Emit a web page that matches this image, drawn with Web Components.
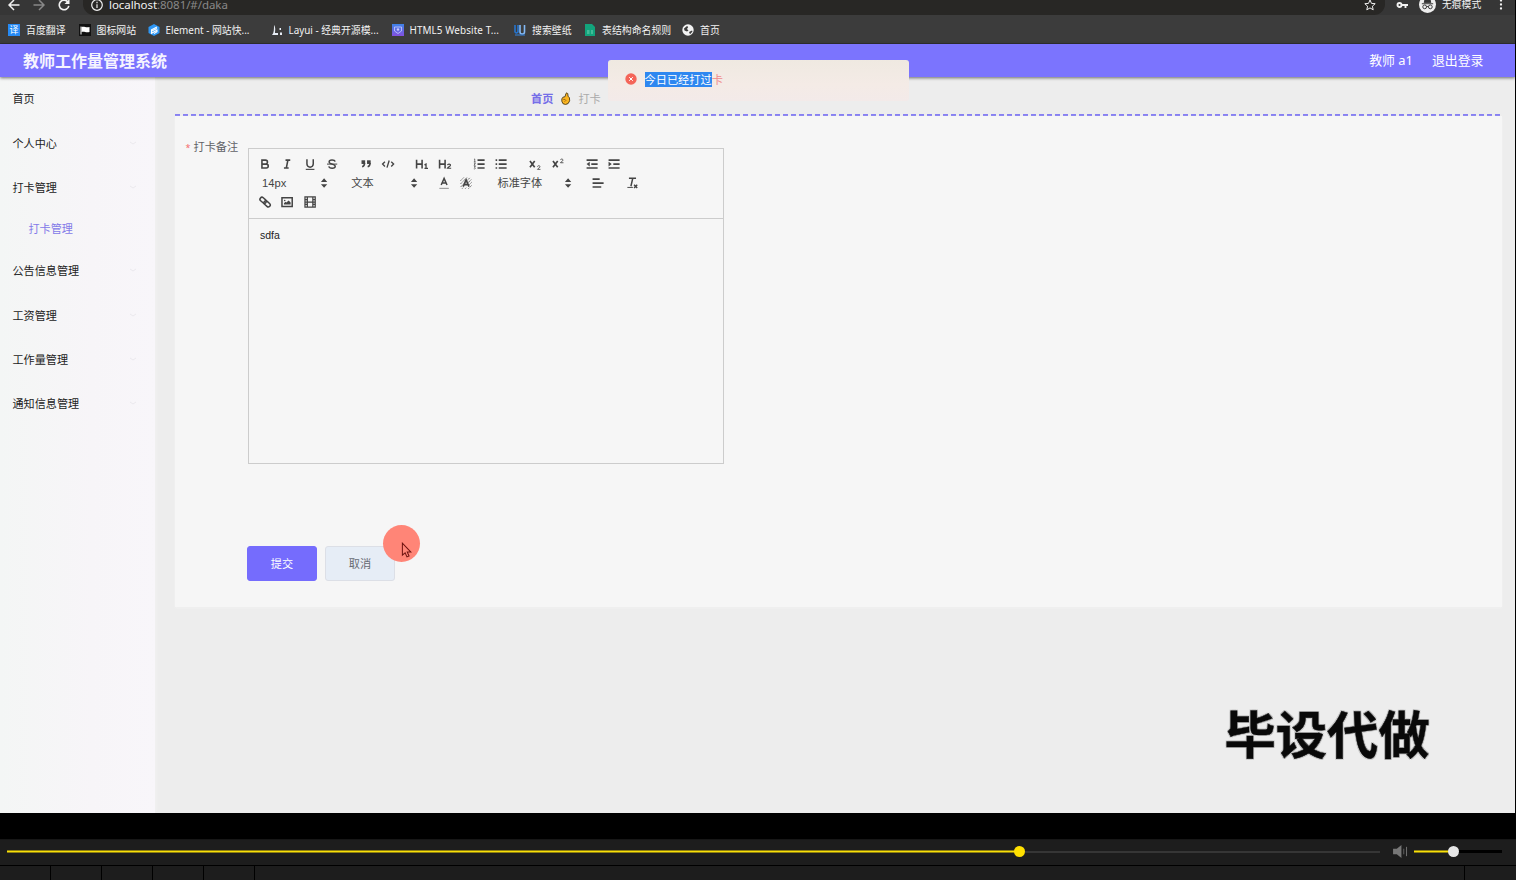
<!DOCTYPE html>
<html lang="zh-CN">
<head>
<meta charset="utf-8">
<title>教师工作量管理系统</title>
<style>
	html, body {
		margin: 0;
		width: 1516px;
		height: 880px;
		overflow: hidden;
		background: #000;
		font-family: "Noto Sans", "Noto Sans CJK SC", sans-serif;
	}
</style>
</head>
<body>
<video-page></video-page>
<script>
const line = (d, extra = '') => `<path d="${d}" fill="none" stroke="currentColor" ${extra}/>`;

// name: [viewBox, markup]
const ICONS = {
	bold: ['0 0 18 18', line('M5 4h4.5a2.5 2.5 0 0 1 0 5H5zM5 9h5.5a2.5 2.5 0 0 1 0 5H5z', 'stroke-width="2"')],
	italic: ['0 0 18 18', line('M7 4h6M5 14h6M8 14l2-10', 'stroke-width="2"')],
	underline: ['0 0 18 18', line('M5 3v6a4 4 0 0 0 8 0V3', 'stroke-width="1.9"') + line('M3.5 15.7h11', 'stroke-width="1.4"')],
	strike: ['0 0 18 18', line('M2.5 9h13', 'stroke-width="1.3"') + line('M12.8 6C12.2 3 5.2 3 5.2 6.2c0 3 7.8 2.5 7.8 5.6 0 3.4-7.5 3.3-8.2.2', 'stroke-width="1.8"')],
	quote: ['0 0 18 18', '<g fill="currentColor" stroke="currentColor" stroke-width="1.6"><rect x="4" y="5" width="3" height="3"/><rect x="11" y="5" width="3" height="3"/></g>' + line('M7 7.5c0 3-.6 4.3-3 5M14 7.5c0 3-.6 4.3-3 5', 'stroke-width="2"')],
	code: ['0 0 18 18', line('M5 6L2 9l3 3M13 6l3 3-3 3M10.4 4.5l-2.8 9', 'stroke-width="1.7"')],
	h1: ['0 0 18 18', line('M2 3.5v11M9 3.5v11M2 9h7', 'stroke-width="2"') + line('M12 10l2-1v5.5M12 14.3h4.5', 'stroke-width="1.6"')],
	h2: ['0 0 18 18', line('M2 3.5v11M9 3.5v11M2 9h7', 'stroke-width="2"') + line('M12 10.3c.5-2 4-1.6 3.8.2-.1 1.4-2.8 2.2-3.8 3.8h4.7', 'stroke-width="1.5"')],
	ordered: ['0 0 18 18', line('M7 4h9M7 9h9M7 14h9', 'stroke-width="2"') + line('M2.5 3l1-.5v4M2.3 6.3h2.4M2.5 8h1.8l-1.8 2.5h2M2.5 12h1.8l-1 1.5c2 .5.5 2-1 1.5', 'stroke-width=".9"')],
	bullet: ['0 0 18 18', line('M6 4h10M6 9h10M6 14h10M2 4h2M2 9h2M2 14h2', 'stroke-width="2"')],
	sub: ['0 0 18 18', line('M2.5 5l6 8M8.5 5l-6 8', 'stroke-width="2.1"') + line('M12 12.2c.5-1.8 3.4-1.4 3.2.2-.1 1.3-2.4 1.8-3.2 3.3h3.8', 'stroke-width="1.1"')],
	sup: ['0 0 18 18', line('M2.5 5l6 8M8.5 5l-6 8', 'stroke-width="2.1"') + line('M12 3.8c.5-1.8 3.4-1.4 3.2.2-.1 1.3-2.4 1.8-3.2 3.3h3.8', 'stroke-width="1.1"')],
	outdent: ['0 0 18 18', line('M2 4h14M8 9h8M2 14h14', 'stroke-width="2"') + '<path d="M6 6v6L2 9z" fill="currentColor"/>'],
	indent: ['0 0 18 18', line('M2 4h14M8 9h8M2 14h14', 'stroke-width="2"') + '<path d="M2 6v6l4-3z" fill="currentColor"/>'],
	color: ['0 0 18 18', '<path d="M3 15h12v1.4H3z" fill="#999"/>' + line('M5.3 11.5L9 3l3.7 8.5M6.5 9h5', 'stroke-width="1.9"')],
	background: ['0 0 18 18', '<path d="M2 6l4-4M2 10l8-8M2 14l12-12M4 16L16 4M8 16l8-8M12 16l4-4" stroke="#555" stroke-width="1.2" stroke-dasharray="1.6 .8"/><path d="M9 3l5 11.500H4z" fill="#f6f6f6"/>' + line('M5.3 13.5L9 5l3.7 8.5M6.5 11h5', 'stroke-width="2.1"')],
	align: ['0 0 18 18', line('M2 4h9M2 9h14M2 14h11', 'stroke-width="2"')],
	clean: ['0 0 18 18', line('M5 3h9M9.8 3L7.5 13', 'stroke-width="1.9"') + line('M3 14.5h7', 'stroke-width="1.2"') + line('M11.5 11l4 4.2M15.5 11l-4 4.2', 'stroke-width="1.8"')],
	link: ['0 0 18 18', '<g fill="none" stroke="currentColor" stroke-width="1.9"><rect x="2" y="4.2" width="9" height="5" rx="2.5" transform="rotate(42 6.5 6.7)"/><rect x="7" y="8.8" width="9" height="5" rx="2.5" transform="rotate(42 11.5 11.3)"/></g>'],
	image: ['0 0 18 18', line('M2.5 3.5h13v11h-13z', 'stroke-width="1.9"') + '<circle cx="6" cy="7" r="1" fill="currentColor"/><path d="M5 12v-1.5l2-2 1 1L11 7l2.5 2.5V12z" fill="currentColor"/>'],
	video: ['0 0 18 18', line('M2.5 2.5h13v13h-13zM5.5 3v12M12.5 3v12M5.5 9h7M3 6h2M3 9h2M3 12h2M13 6h2M13 9h2M13 12h2', 'stroke-width="1.6"')],
	picker: ['0 0 18 18', '<path d="M5 7.5h8L9 3zM5 10.5h8L9 15z" fill="currentColor"/>'],
	back: ['0 0 12 12', line('M6 1L1 6l5 5M1 6h10.5', 'stroke-width="1.5"')],
	forward: ['0 0 12 12', line('M6 1l5 5-5 5M11 6H.5', 'stroke-width="1.5"')],
	reload: ['0 0 12 12', line('M10 3.2A4.8 4.8 0 1 0 10.8 6.8', 'stroke-width="1.6"') + '<path d="M11.5 0v5h-5z" fill="currentColor"/>'],
	info: ['0 0 12 12', line('M11.3 6A5.3 5.3 0 1 1 .7 6a5.3 5.3 0 0 1 10.6 0zM6 5.2V9M6 2.8v1.4', 'stroke-width="1.2"')],
	star: ['0 0 12 12', line('M6 1l1.5 3.4 3.7.3-2.8 2.5.8 3.6L6 8.9l-3.2 1.9.8-3.6L.8 4.7l3.7-.3z')],
	key: ['0 0 12 12', line('M5.5 6a2 2 0 1 1-4 0 2 2 0 0 1 4 0zM5.5 6H12M9.5 6v3', 'stroke-width="1.9"')],
	incognito: ['0 0 18 18', '<circle cx="9" cy="9" r="9" fill="#eee"/><path d="M3 8.2h12M5.5 7l1-4h5l1 4z" fill="#333" stroke="#333"/><path d="M8 11.5a2 2 0 1 1-4 0 2 2 0 0 1 4 0zM14 11.5a2 2 0 1 1-4 0 2 2 0 0 1 4 0zM8 11.2h2" fill="none" stroke="#333"/>'],
	more: ['0 0 12 12', '<g fill="currentColor"><circle cx="6" cy="1.5" r="1.15"/><circle cx="6" cy="5.5" r="1.15"/><circle cx="6" cy="9.5" r="1.15"/></g>'],
	flag: ['0 0 12 12', '<rect width="12" height="12" fill="#111"/><path d="M2 2.5v8" stroke="#fff"/><path d="M2.5 3c3-1 4 1 8 0v5c-4 1-5-1-8 0z" fill="#fff"/>'],
	element: ['0 0 12 12', '<path d="M6 0l5.5 3v6L6 12 .5 9V3z" fill="#2e97f5"/><path d="M9 3L3.5 5.8v1.4L9 4.5M3.5 7.2v2l5.5-3v1.6L6 9.6" fill="none" stroke="#fff" stroke-width="1.1"/>'],
	layui: ['0 0 12 12', '<path d="M3 1c2 3 1 6 1 8h3v2H1c2-2 2-6 2-10zM8.5 4H10v2H8.500zM9 8.500h2V11H9z" fill="#e8edf5"/>'],
	html5: ['0 0 12 12', '<defs><linearGradient id="a" x2="0" y2="1"><stop stop-color="#3e83e8"/><stop offset="1" stop-color="#8350e0"/></linearGradient></defs><rect width="12" height="12" fill="url(#a)"/><path d="M2.5 3h7v4L6 9.5 2.5 7z" fill="none" stroke="#c9cdfc" stroke-width=".8"/><circle cx="6" cy="5.5" r="1.2" fill="#c9cdfc"/>'],
	wallpaper: ['0 0 12 12', '<path d="M1 1v7q1 2 3 0V1" fill="none" stroke="#2577d5" stroke-width="1.5"/><path d="M6 1v7q0 2 2.2 2 2.3 0 2.3-2V1" fill="none" stroke="#83b9f4" stroke-width="1.6"/><path d="M1 11h10" stroke="#3283df"/>'],
	sheet: ['0 0 12 12', '<path d="M1 0h7l3 3v9H1z" fill="#12a47c"/><path d="M3 7h2.500M7 7h2M3 9h2.500M7 9h2" stroke="#8fdcc4" stroke-width=".8"/>'],
	globe: ['0 0 12 12', '<circle cx="6" cy="6" r="5.7" fill="#f3f3f3"/><path d="M2 4.5l3-2.5 1.2 1-1.2 2 1.5 1.5-1.5 1-2.5-1zM7 8l3-1.5.5 1-2.5 2.7z" fill="#3c3c3c"/>'],
	hand: ['0 0 12 14', '<path d="M2 7.500Q2.500 5 5.500 5L6.500 1.500Q7.800 0 8.500 1.800L8.800 4.500Q11 5.500 10.500 9.500 9.500 13.500 6 13.500T2 10z" fill="#fbb51f" stroke="#4b3d1d"/><path d="M3.500 8q2.500-.5 3 1L5 10.500" fill="none" stroke="#8b5b14" stroke-width=".9"/>'],
	error: ['0 0 12 12', '<circle cx="6" cy="6" r="5.7" fill="#f46559"/><path d="M4.2 4.2l3.6 3.6M7.8 4.2L4.2 7.8" stroke="#fff"/>'],
	pointer: ['0 0 12 18', '<path d="M1.5 1v13l3-2.5 2 4.5 2.3-1-2-4.3h4z" fill="#ff8577" stroke="#6e1411" stroke-width="1.1"/>'],
	volume: ['0 0 16 14', '<path d="M0 4h4l5-4v14L4 10H0z" fill="#777"/><path d="M11.5 4v6" stroke="#666"/><path d="M14.5 2v10" stroke="#777"/>'],
	chevron: ['0 0 12 12', line('M3 5l3 2 3-2')],
};

class UiIcon extends HTMLElement {
	constructor() {
		super();
		this.attachShadow({ mode: 'open' });
	}

	connectedCallback() {
		const [box, markup] = ICONS[this.getAttribute('name')];
		this.shadowRoot.innerHTML = `
			<style>
				:host { display: block; flex: none; width: var(--icon-w, 12px); height: var(--icon-h, var(--icon-w, 12px)); }
				svg { display: block; width: 100%; height: 100%; }
			</style>
			<svg viewBox="${box}">${markup}</svg>`;
	}
}
customElements.define('ui-icon', UiIcon);

class BookmarkLink extends HTMLElement {
	constructor() {
		super();
		this.attachShadow({ mode: 'open' });
		this.shadowRoot.innerHTML = `
			<style>
				:host { display: flex; align-items: center; gap: 6px; min-width: 0; white-space: nowrap; }
				.icon { width: 12px; height: 12px; flex: none; }
			</style>
			<span class="icon"><slot name="icon"></slot></span><slot></slot>`;
	}
}
customElements.define('bookmark-link', BookmarkLink);

class BrowserBar extends HTMLElement {
	constructor() {
		super();
		this.attachShadow({ mode: 'open' });
		this.shadowRoot.innerHTML = `
			<style>
				:host { display: block; background: #3c3c3c; color: #f2f2f2; height: 44px; }
				/* the bar is scrolled half out of the frame, so its items sit on the top edge */
				.address { display: flex; align-items: center; height: 15px; box-sizing: border-box; padding: 0 0 6px 8px; background: #363636; }
				.address > ui-icon { margin-right: 13px; }
				.dim { color: #888; }
				.pill { display: flex; align-items: center; height: 15px; width: 1302px; flex: none; box-sizing: border-box; padding: 0 9px 6px 8px; margin-bottom: -6px; border-radius: 0 0 11px 11px; background: #282725; font-size: 11.5px; line-height: 9px; }
				.url { flex: 1; margin-left: 6px; letter-spacing: -.06px; }
				.key { margin-left: 11px; }
				.address > .key { margin-right: 11px; }
				.mode { display: flex; align-items: center; width: 68px; gap: 6px; font-size: 9.8px; line-height: 9px; white-space: nowrap; }
				.mode ui-icon { --icon-w: 17px; }
				.bookmarks { display: grid; grid-template-columns: 70.5px 69px 123px 121px 122.5px 70px 98px 50px; align-items: center; height: 29px; padding: 1px 0 0 8px; font-size: 9.9px; line-height: 16px; border-bottom: 1px solid #303033; box-sizing: border-box; }
				.yi { display: block; width: 12px; height: 12px; background: #268af4; color: #fff; font-size: 9px; line-height: 12px; text-align: center; }
				.html5 { letter-spacing: .1px; }
			</style>
			<div class="address">
				<ui-icon name="back"></ui-icon>
				<ui-icon name="forward" class="dim"></ui-icon>
				<ui-icon name="reload"></ui-icon>
				<div class="pill">
					<ui-icon name="info"></ui-icon>
					<span class="url">localhost<span class="dim">:8081/#/daka</span></span>
					<ui-icon name="star"></ui-icon>
				</div>
				<ui-icon name="key" class="key"></ui-icon>
				<span class="mode"><ui-icon name="incognito"></ui-icon>无痕模式</span>
				<ui-icon name="more" style="margin-left:14px"></ui-icon>
			</div>
			<div class="bookmarks">
				<bookmark-link><span slot="icon" class="yi">译</span>百度翻译</bookmark-link>
				<bookmark-link><ui-icon slot="icon" name="flag"></ui-icon>图标网站</bookmark-link>
				<bookmark-link><ui-icon slot="icon" name="element"></ui-icon>Element - 网站快...</bookmark-link>
				<bookmark-link><ui-icon slot="icon" name="layui"></ui-icon>Layui - 经典开源模...</bookmark-link>
				<bookmark-link class="html5"><ui-icon slot="icon" name="html5"></ui-icon>HTML5 Website T...</bookmark-link>
				<bookmark-link><ui-icon slot="icon" name="wallpaper"></ui-icon>搜索壁纸</bookmark-link>
				<bookmark-link><ui-icon slot="icon" name="sheet"></ui-icon>表结构命名规则</bookmark-link>
				<bookmark-link><ui-icon slot="icon" name="globe"></ui-icon>首页</bookmark-link>
			</div>`;
	}
}
customElements.define('browser-bar', BrowserBar);

class AppHeader extends HTMLElement {
	constructor() {
		super();
		this.attachShadow({ mode: 'open' });
		this.shadowRoot.innerHTML = `
			<style>
				:host { display: flex; align-items: center; height: 33px; box-sizing: border-box; padding: 0 31.5px 0 23px; background: #7b74fe; color: #fff; position: relative; z-index: 1; box-shadow: 0 1px 3px rgba(0, 0, 0, .55); font-size: 12.9px; line-height: 32px; white-space: nowrap; }
				h1 { flex: 1; margin: 0; font-size: 16px; font-weight: 700; color: #f6f4ff; }
				.user { margin-right: 19px; }
				span { margin-top: -1px; }
			</style>
			<h1>教师工作量管理系统</h1>
			<span class="user">教师 a1</span>
			<span>退出登录</span>`;
	}
}
customElements.define('app-header', AppHeader);

class SideMenu extends HTMLElement {
	constructor() {
		super();
		this.attachShadow({ mode: 'open' });
		this.shadowRoot.innerHTML = `
			<style>
				:host { display: block; width: 155px; flex: none; background: linear-gradient(90deg, #f4f6f5, #f7f5f8 60%, #f8f6fa); box-shadow: 0 0 4px #f4f4f4; z-index: 0; position: relative; font-size: 11.1px; color: #222; }
				.item { display: flex; align-items: center; justify-content: space-between; height: 44.2px; box-sizing: border-box; padding: 1px 16px 0 12.5px; }
				.home { height: 43px; padding: 0 16px 2px 12.5px; }
				.child { height: 39.5px; padding: 0 0 0 28.5px; color: #837ae8; }
				ui-icon { color: #ebe9ee; }
			</style>
			<div class="item home">首页</div>
			<div class="item">个人中心<ui-icon name="chevron"></ui-icon></div>
			<div class="item">打卡管理<ui-icon name="chevron"></ui-icon></div>
			<div class="item child">打卡管理</div>
			<div class="item">公告信息管理<ui-icon name="chevron"></ui-icon></div>
			<div class="item">工资管理<ui-icon name="chevron"></ui-icon></div>
			<div class="item">工作量管理<ui-icon name="chevron"></ui-icon></div>
			<div class="item">通知信息管理<ui-icon name="chevron"></ui-icon></div>`;
	}
}
customElements.define('side-menu', SideMenu);

class RichEditor extends HTMLElement {
	constructor() {
		super();
		this.attachShadow({ mode: 'open' });
		const group = (...names) => `<span class="group">${names.map(n => `<span class="btn"><ui-icon name="${n}"></ui-icon></span>`).join('')}</span>`;
		const picker = (text, width) => `<span class="group picker" style="width:${width}px">${text}<ui-icon name="picker"></ui-icon></span>`;
		this.shadowRoot.innerHTML = `
			<style>
				:host { display: flex; flex-direction: column; width: 476px; height: 316px; box-sizing: border-box; border: 1px solid #ccc; color: #444; }
				.toolbar { padding: 6px 5.5px; height: 70px; box-sizing: border-box; border-bottom: 1px solid #ccc; --icon-w: 14.2px; }
				.row { display: flex; height: 19px; }
				.group { display: flex; flex: none; margin-right: 11.8px; }
				.btn { display: flex; align-items: center; justify-content: center; width: 22.3px; }
				.picker { align-items: center; justify-content: space-between; box-sizing: border-box; padding: 0 0 0 8px; font: 11.2px/19px "Liberation Sans", "Noto Sans CJK SC", sans-serif; }
				.body { padding: 9px 11.5px; font: 10.5px/15px "Liberation Sans", sans-serif; color: #222; }
			</style>
			<div class="toolbar">
				<div class="row">
					${group('bold', 'italic', 'underline', 'strike')}${group('quote', 'code')}${group('h1', 'h2')}${group('ordered', 'bullet')}${group('sub', 'sup')}${group('outdent', 'indent')}
				</div>
				<div class="row">
					${picker('14px', 77.5)}${picker('文本', 78)}${group('color', 'background')}${picker('标准字体', 86)}${group('align')}${group('clean')}
				</div>
				<div class="row">${group('link', 'image', 'video')}</div>
			</div>
			<div class="body"><slot></slot></div>`;
	}
}
customElements.define('rich-editor', RichEditor);

class FormButton extends HTMLElement {
	constructor() {
		super();
		this.attachShadow({ mode: 'open' });
		this.shadowRoot.innerHTML = `
			<style>
				:host { display: flex; align-items: center; justify-content: center; width: 70px; height: 35px; box-sizing: border-box; border: 1px solid #dcdfe6; border-radius: 3px; background: #e6edf6; color: #666b73; font-size: 11.2px; }
				:host([primary]) { background: #756cfd; border-color: #756cfd; color: #fff; }
			</style>
			<slot></slot>`;
	}
}
customElements.define('form-button', FormButton);

class PunchPage extends HTMLElement {
	constructor() {
		super();
		this.attachShadow({ mode: 'open' });
		this.shadowRoot.innerHTML = `
			<style>
				:host { display: block; flex: 1; padding: 0 13px 0 20px; background: #ededed; }
				.crumb { display: flex; align-items: center; height: 37px; box-sizing: border-box; padding: 5px 0 0 356px; font-size: 11.2px; color: #aaa; }
				.crumb b { color: #756ee8; }
				.crumb ui-icon { --icon-w: 11px; --icon-h: 13px; margin: 1px 7px 0; }
				.dash { height: 2px; background: repeating-linear-gradient(90deg, #8780f2 0 5px, transparent 5px 8px); }
				.panel { height: 491px; box-sizing: border-box; background: #f6f6f6; padding: 32px 0 0 10.5px; box-shadow: 0 1px 2px #f1f1f1; }
				.field { display: flex; }
				.label { width: 62px; font-size: 11.2px; line-height: 16px; margin-top: -9px; color: #606266; white-space: nowrap; }
				.label i { font-style: normal; font-size: 9px; color: #f56c6c; margin-right: 3px; }
				.actions { display: flex; gap: 8px; margin: 81.5px 0 0 61.5px; }
			</style>
			<div class="crumb"><b>首页</b><ui-icon name="hand"></ui-icon>打卡</div>
			<div class="dash"></div>
			<div class="panel">
				<div class="field">
					<div class="label"><i>*</i>打卡备注</div>
					<rich-editor>sdfa</rich-editor>
				</div>
				<div class="actions">
					<form-button primary>提交</form-button>
					<form-button>取消</form-button>
				</div>
			</div>`;
	}
}
customElements.define('punch-page', PunchPage);

class MessageToast extends HTMLElement {
	constructor() {
		super();
		this.attachShadow({ mode: 'open' });
		this.shadowRoot.innerHTML = `
			<style>
				:host { display: flex; align-items: center; gap: 8px; box-sizing: border-box; padding: 0 17px 3px; border-radius: 3px; background: linear-gradient(#efe9e1, #f4ebe6 60%, #f3eae9); color: #f0898a; font-size: 11.2px; line-height: 15px; }
				mark { background: #2e87f0; color: #fff; }
			</style>
			<ui-icon name="error"></ui-icon>
			<span><slot></slot></span>`;
		// highlight the selected part of the message
		const mark = document.createElement('mark');
		mark.textContent = this.getAttribute('selected');
		this.shadowRoot.querySelector('slot').before(mark);
	}
}
customElements.define('message-toast', MessageToast);

class PlayerControls extends HTMLElement {
	constructor() {
		super();
		this.attachShadow({ mode: 'open' });
		this.shadowRoot.innerHTML = `
			<style>
				:host { display: block; height: 41px; background: #1d1d1d; }
				.seek { display: flex; align-items: center; height: 26px; box-sizing: border-box; padding: 0 14px 2px 7px; border-top: 1px solid #171717; }
				.done { height: 1px; background: #f9e008; border: solid #8e8010; border-width: 1px 0; }
				.knob { width: 11px; height: 11px; border-radius: 50%; background: #ffe000; margin: 0 -5px; z-index: 1; flex: none; }
				.rest { height: 2px; background: #363636; }
				.rest.volume { background: #000; height: 3px; }
				.knob.volume { background: #e6e6e6; }
				ui-icon { --icon-w: 15px; --icon-h: 13px; margin: 0 6px 0 13px; }
				.tabs { display: flex; height: 15px; box-sizing: border-box; border-top: 1px solid #000; }
				.tabs span { width: 51px; box-sizing: border-box; border-right: 1px solid #000; }
				.tabs .wide { width: 1210px; }
			</style>
			<div class="seek">
				<div class="done" style="width:1012px"></div><div class="knob"></div><div class="rest" style="width:360px"></div>
				<ui-icon name="volume"></ui-icon>
				<div class="done" style="width:39px"></div><div class="knob volume"></div><div class="rest volume" style="width:48px"></div>
			</div>
			<div class="tabs"><span></span><span></span><span></span><span></span><span></span><span class="wide"></span></div>`;
	}
}
customElements.define('player-controls', PlayerControls);

class VideoPage extends HTMLElement {
	constructor() {
		super();
		this.attachShadow({ mode: 'open' });
		this.shadowRoot.innerHTML = `
			<style>
				:host { display: flex; flex-direction: column; width: 1516px; height: 880px; background: #000; overflow: hidden; }
				.frame { position: relative; width: 1515px; height: 813px; overflow: hidden; display: flex; flex-direction: column; }
				.main { display: flex; flex: 1; }
				player-controls { margin-top: 26px; }
				/* layers floating over the page */
				message-toast { position: absolute; left: 607.5px; top: 60px; width: 301px; height: 41px; z-index: 2; }
				.tap { position: absolute; left: 383px; top: 525px; width: 37px; height: 37px; border-radius: 50%; background: #ff8577; }
				.tap ui-icon { --icon-w: 11px; --icon-h: 17px; margin: 17px 0 0 18px; }
				.watermark { position: absolute; left: 1224.5px; top: 697px; font: 700 51.3px/70px "Noto Sans CJK SC", sans-serif; color: #090909; -webkit-text-stroke: .5px #090909; white-space: nowrap; text-shadow: 0 0 1px #fff, 1px 1px 0 #c4c4c4, -1px -1px 0 #c4c4c4, 1px -1px 0 #c4c4c4, -1px 1px 0 #c4c4c4; }
			</style>
			<div class="frame">
				<browser-bar></browser-bar>
				<app-header></app-header>
				<div class="main">
					<side-menu></side-menu>
					<punch-page></punch-page>
				</div>
				<message-toast selected="今日已经打过">卡</message-toast>
				<div class="tap"><ui-icon name="pointer"></ui-icon></div>
				<div class="watermark">毕设代做</div>
			</div>
			<player-controls></player-controls>`;
	}
}
customElements.define('video-page', VideoPage);
</script>
</body>
</html>
